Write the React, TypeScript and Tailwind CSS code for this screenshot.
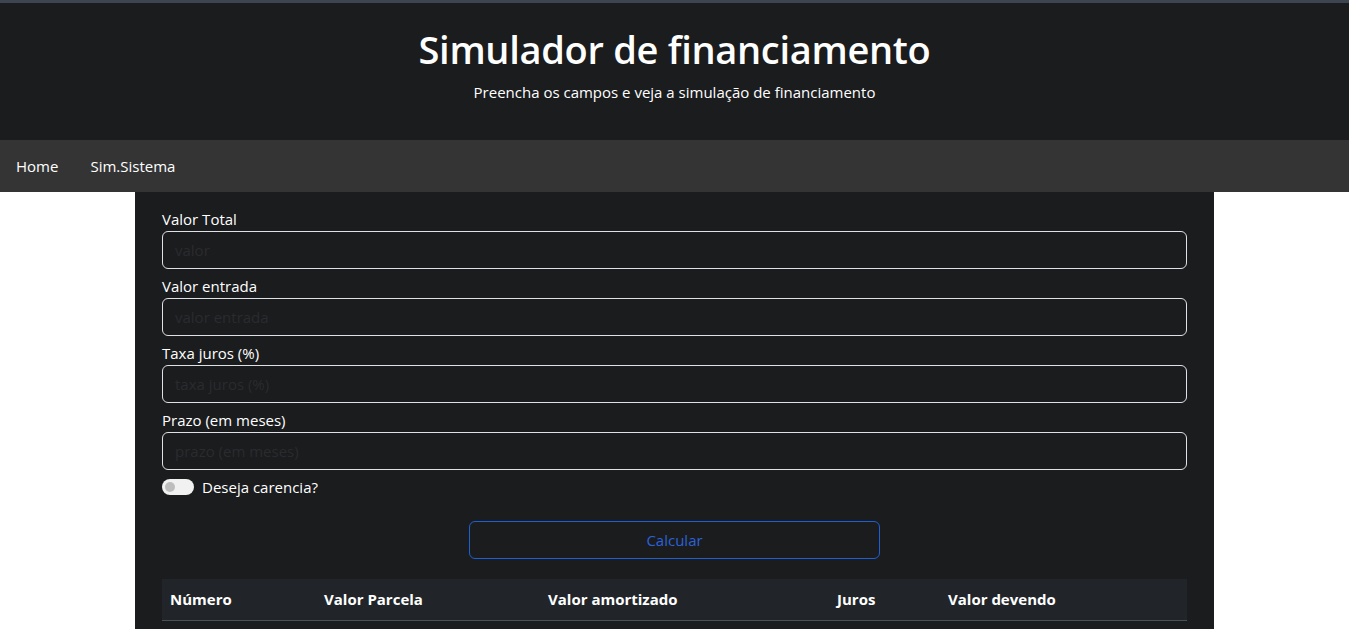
const font = "font-['Segoe_UI','Open_Sans','Noto_Sans',sans-serif]";

const fields = [
  { label: "Valor Total", placeholder: "valor" },
  { label: "Valor entrada", placeholder: "valor entrada" },
  { label: "Taxa juros (%)", placeholder: "taxa juros (%)" },
  { label: "Prazo (em meses)", placeholder: "prazo (em meses)" },
];

const columns = [
  { title: "Número", w: "w-[154px]", align: "text-left" },
  { title: "Valor Parcela", w: "w-[224px]", align: "text-left" },
  { title: "Valor amortizado", w: "w-[289px]", align: "text-left" },
  { title: "Juros", w: "w-[111px]", align: "text-left" },
  { title: "Valor devendo", w: "", align: "text-left" },
];

export default function App() {
  return (
    <div className={`min-h-[629px] bg-white text-white ${font}`}>
      <header className="border-t-[3px] border-[#3d4650] bg-[#1b1c1e] h-[140px] flex flex-col items-center pt-[21px]">
        <h1 className="text-[38px] leading-[50px] font-semibold tracking-[-0.3px]">Simulador de financiamento</h1>
        <p className="text-[15px] leading-[20px] mt-[8px]">Preencha os campos e veja a simulação de financiamento</p>
      </header>

      <nav className="bg-[#343434] h-[52px] flex items-center px-4 gap-8 text-[15px]">
        <a>Home</a>
        <a>Sim.Sistema</a>
      </nav>

      <main className="mx-auto w-[1079px] bg-[#1b1c1e] px-[27px] pt-[15px] pb-[9px]">
        {fields.map((f) => (
          <div key={f.label} className="mb-[5px]">
            <label className="block text-[15px] leading-[24px]">{f.label}</label>
            <input
              placeholder={f.placeholder}
              className="w-full h-[38px] rounded-[6px] border border-[#dee2e6] bg-[#1b1c1e] px-3 text-[15px] placeholder:text-[#2a2b2e] outline-none"
            />
          </div>
        ))}

        <div className="flex items-center gap-2 h-[24px] mt-[1px]">
          <span className="relative w-[32px] h-[16px] rounded-full bg-[#f1f1f1]">
            <span className="absolute left-[3px] top-[3px] w-[10px] h-[10px] rounded-full bg-[#bdbdbd]" />
          </span>
          <span className="text-[15px]">Deseja carencia?</span>
        </div>

        <div className="flex justify-center mt-[22px]">
          <button className="w-[411px] h-[38px] rounded-[6px] border border-[#1f5fd6] text-[#2b62d9] text-[15px]">
            Calcular
          </button>
        </div>

        <table className="w-full mt-[20px] border-collapse">
          <thead>
            <tr className="bg-[#212529] border-b border-[#495057]">
              {columns.map((c) => (
                <th key={c.title} className={`${c.w} ${c.align} h-[41px] px-2 text-[15px] font-bold`}>
                  {c.title}
                </th>
              ))}
            </tr>
          </thead>
        </table>
      </main>
    </div>
  );
}
